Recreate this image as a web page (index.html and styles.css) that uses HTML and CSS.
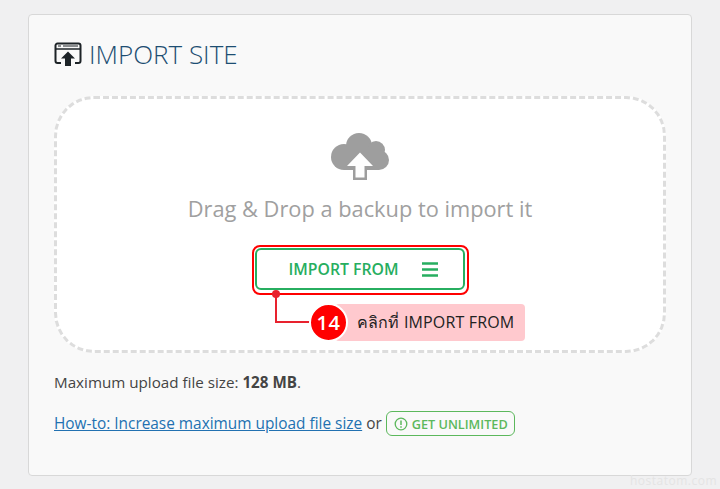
FILE: index.html
```html
<!DOCTYPE html>
<html lang="th">
<head>
  <meta charset="utf-8" />
  <title>Import site</title>
  <meta name="viewport" content="width=device-width, initial-scale=1" />
  <link rel="stylesheet" href="styles.css">
</head>
<body>
  <div class="card">
    <!-- TITLE -->
    <h2 class="title">
      <svg class="titleIcon" width="28" height="24" viewBox="0 0 28 24">
        <path d="M7 21H3.5A2 2 0 0 1 1.5 19V3.5A2 2 0 0 1 3.500 1.500H24.500A2 2 0 0 1 26.500 3.500V19A2 2 0 0 1 24.500 21H21" fill="none" stroke="#1d2327" stroke-width="2"/>
        <path d="M2 7H26" stroke="#1d2327" stroke-width="1.500"/>
        <path d="M4 4H7M9 4H24" stroke="#1d2327" stroke-width="1"/>
        <path d="M14 9.500L21 16.500H17V24H11V16.500H7Z" fill="#1d2327"/>
      </svg>
      IMPORT SITE
    </h2>

    <!-- DROP ZONE -->
    <div class="dropZone">
      <svg class="cloud" width="60" height="48" viewBox="0 0 60 48">
        <g fill="#9e9e9e">
          <circle cx="14" cy="24" r="13"/>
          <circle cx="29" cy="13" r="13"/>
          <circle cx="46" cy="17" r="9"/>
          <circle cx="49" cy="27" r="10"/>
          <rect x="14" y="14" width="35" height="23"/>
        </g>
        <path d="M23 30H37V47H23Z" fill="#9e9e9e"/>
        <path d="M30 19.500L43 33H34.500V44.500H25.500V33H17Z" fill="#fff"/>
      </svg>
      <p class="dropText">Drag &amp; Drop a backup to import it</p>
      <div class="btnWrap">
        <button class="importBtn">
          IMPORT FROM
          <svg width="16" height="15" viewBox="0 0 16 15">
            <path d="M0 1.500H16M0 7.500H16M0 13.500H16" stroke="#27ae60" stroke-width="2.500"/>
          </svg>
        </button>
      </div>
    </div>

    <p class="sizeLine">Maximum upload file size: <strong>128 MB</strong>.</p>
    <p class="howLine">
      <a href="#">How-to: Increase maximum upload file size</a> or
      <span class="unlimited">
        <svg width="14" height="14" viewBox="0 0 14 14">
          <circle cx="7" cy="7" r="5.800" fill="none" stroke="#5cb85c" stroke-width="1.300"/>
          <path d="M7 3.500V8M7 9.300V10.800" stroke="#5cb85c" stroke-width="1.500"/>
        </svg>
        GET UNLIMITED
      </span>
    </p>
  </div>

  <!-- ANNOTATION -->
  <div class="outline"></div>
  <div class="leader"></div>
  <div class="dot"></div>
  <div class="note">คลิกที่ IMPORT FROM</div>
  <div class="stepBadge">14</div>

  <div class="watermark">hostatom.com</div>
</body>
</html>
```

FILE: styles.css
```css
/* ========== GLOBAL ========== */
* {
  box-sizing: border-box;
  margin: 0;
  padding: 0;
}
body {
  position: relative;
  height: 489px;
  padding: 14px 28px 13px 28px;
  background: #f0f0f1;
  font-family: "Open Sans", "Noto Sans CJK SC", sans-serif;
  color: #444;
  overflow: hidden;
}

/* ========== CARD ========== */
.card {
  height: 462px;
  padding: 23px 25px 0 25px;
  background: #f9f9f9;
  border: 1px solid #d8d8d8;
  border-radius: 4px;
}
.title {
  display: flex;
  align-items: center;
  gap: 7px;
  height: 32px;
  font-size: 26px;
  font-weight: 300;
  color: #1d4e72;
}

/* ========== DROP ZONE ========== */
.dropZone {
  display: flex;
  flex-direction: column;
  align-items: center;
  height: 257px;
  margin-top: 26px;
  padding-top: 34px;
  background: #fff;
  border: 3px dashed #ddd;
  border-radius: 40px;
}
.dropText {
  margin-top: 13px;
  font-size: 21.8px;
  line-height: 30px;
  color: #a0a0a0;
}
.btnWrap {
  margin-top: 24px;
}
.importBtn {
  display: flex;
  align-items: center;
  justify-content: center;
  gap: 23px;
  width: 210px;
  height: 42px;
  padding-left: 6px;
  background: #fff;
  border: 2px solid #27ae60;
  border-radius: 6px;
  font-family: inherit;
  font-size: 15.800px;
  font-weight: 600;
  color: #27ae60;
}

/* ========== BOTTOM TEXT ========== */
.sizeLine {
  margin-top: 19px;
  font-size: 15.200px;
  line-height: 20px;
}
.howLine {
  margin-top: 19px;
  font-size: 15.400px;
  line-height: 26px;
}
.howLine a {
  color: #2271b1;
}
.unlimited {
  display: inline-flex;
  align-items: center;
  gap: 4px;
  height: 25px;
  padding: 0 6px 0 7px;
  margin-bottom: 3px;
  vertical-align: middle;
  border: 1px solid #5cb85c;
  border-radius: 6px;
  font-size: 12.700px;
  font-weight: 600;
  color: #5cb85c;
}

/* ========== ANNOTATION ========== */
.outline {
  position: absolute;
  left: 252px;
  top: 245px;
  width: 217px;
  height: 50px;
  border: 2px solid #f00;
  border-radius: 8px;
}
.leader {
  position: absolute;
  left: 275px;
  top: 294px;
  width: 40px;
  height: 29px;
  border-left: 2px solid #e8222e;
  border-bottom: 2px solid #e8222e;
}
.dot {
  position: absolute;
  left: 272px;
  top: 290px;
  width: 8px;
  height: 8px;
  border-radius: 50%;
  background: #e8222e;
}
.note {
  position: absolute;
  left: 335px;
  top: 304px;
  width: 190px;
  height: 37px;
  padding-left: 22px;
  background: #ffc9ce;
  border-radius: 4px;
  font-size: 16px;
  letter-spacing: 0.150px;
  line-height: 36px;
  color: #222;
}
.stepBadge {
  position: absolute;
  left: 309px;
  top: 303px;
  width: 39px;
  height: 39px;
  background: #f00;
  border: 2px solid #fff;
  border-radius: 50%;
  font-size: 20px;
  font-weight: 600;
  letter-spacing: 0.500px;
  line-height: 35px;
  text-align: center;
  color: #fff;
}
.watermark {
  position: absolute;
  right: 3px;
  bottom: 0;
  font-size: 12px;
  letter-spacing: 0.500px;
  color: #e4e4e4;
}
```
